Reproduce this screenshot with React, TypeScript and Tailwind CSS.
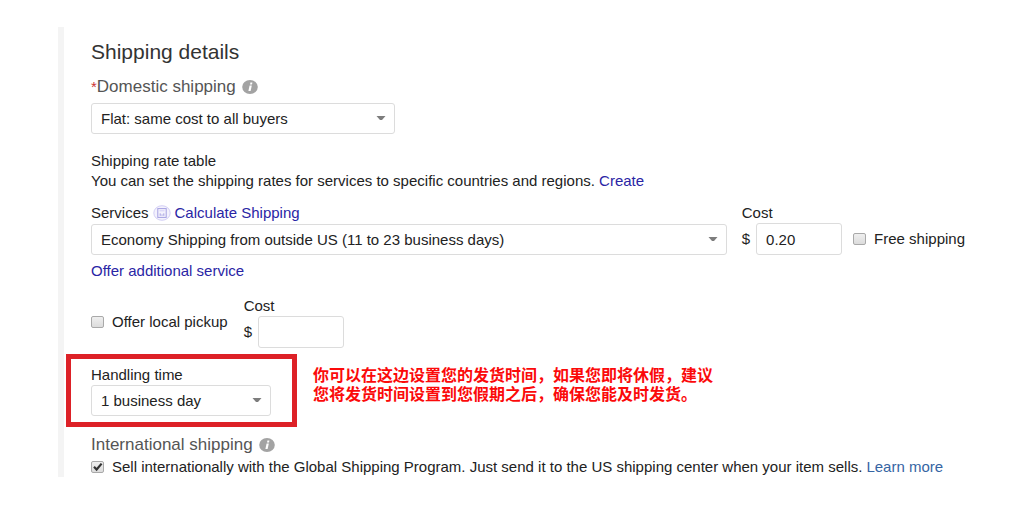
import { useState } from "react";
import type { ReactNode, SelectHTMLAttributes, InputHTMLAttributes } from "react";

function InfoIcon() {
    return (
        <svg viewBox="0 0 16 14" className="h-3.5 w-4 shrink-0" aria-hidden="true">
            <ellipse cx="8" cy="7" rx="7.8" ry="6.9" fill="#a3a3a3" />
            <path d="M8.4 2.6h2l-.4 1.8H8z" fill="#fff" />
            <path d="M7.6 5.4h2.2L8.6 11H6.4z" fill="#fff" />
        </svg>
    );
}

function CalculatorIcon() {
    return (
        <svg viewBox="0 0 18 16" className="h-4 w-[18px] shrink-0" fill="none" aria-hidden="true">
            <ellipse cx="9" cy="8" rx="8.2" ry="7.3" fill="#f4f2fd" stroke="#d3cff5" />
            <rect x="4.8" y="3.6" width="8.4" height="8.8" stroke="#a5a1e2" />
            <path d="M6.5 5.8h5" stroke="#d3cff5" />
            <path d="M7.2 8.4v2.4M9 9.4v1.4M10.8 8.4v2.4" stroke="#a5a1e2" />
        </svg>
    );
}

function Select({ className, children, ...props }: SelectHTMLAttributes<HTMLSelectElement> & { className: string }) {
    return (
        <div className={`relative ${className}`}>
            <select
                {...props}
                className="block h-[31px] w-full appearance-none rounded-[3px] border border-[#dcdcdc] bg-white pl-[9px] pr-8 text-[#222]"
            >
                {children}
            </select>
            <svg
                viewBox="0 0 10 5"
                className="pointer-events-none absolute right-[9px] top-[13px] h-[5px] w-2.5"
                aria-hidden="true"
            >
                <path d="M.5 0h9L6 4H4z" fill="#7d7d7d" />
            </svg>
        </div>
    );
}

function Checkbox({ children, ...props }: InputHTMLAttributes<HTMLInputElement> & { children: ReactNode }) {
    return (
        <label className="flex items-center gap-2 whitespace-nowrap">
            <span className="relative block h-3 w-[13px]">
                <input
                    type="checkbox"
                    {...props}
                    className="peer block h-3 w-[13px] appearance-none rounded-xs border border-[#a9a9a9] bg-linear-to-b from-[#efefef] to-[#dcdcdc]"
                />
                <svg
                    viewBox="0 0 13 12"
                    className="pointer-events-none absolute inset-0 hidden peer-checked:block"
                    fill="none"
                    aria-hidden="true"
                >
                    <path d="M3 5.8l2.6 2.7L10.6 2.6" stroke="#333" strokeWidth="2.2" />
                </svg>
            </span>
            {children}
        </label>
    );
}

function CostField({ id, value }: { id: string; value: string }) {
    const [cost, setCost] = useState(value);
    return (
        <div>
            <label htmlFor={id} className="block">
                Cost
            </label>
            <div className="flex items-center gap-1.5">
                <span>$</span>
                <input
                    id={id}
                    value={cost}
                    onChange={(e) => setCost(e.target.value)}
                    className="block h-8 w-[86px] rounded-[3px] border border-[#dcdcdc] px-[9px]"
                />
            </div>
        </div>
    );
}

export default function App() {
    return (
        <div className="bg-white py-[27px] pl-[58px] font-['Liberation_Sans',Arial,sans-serif] text-[15px] leading-5 text-[#222]">
            <form className="border-l-6 border-[#f4f4f4] pl-[27px] pr-12 pt-[11px]">
                <h2 className="text-[21px] leading-7 text-[#333]">Shipping details</h2>

                <div className="mt-[11px] flex items-center gap-1.5 text-[17px] leading-5 text-[#555]">
                    <label htmlFor="domestic">
                        <span className="text-[15px] text-[#c33]">*</span>Domestic shipping
                    </label>
                    <InfoIcon />
                </div>
                <Select id="domestic" className="mt-1.5 w-[304px]">
                    <option>Flat: same cost to all buyers</option>
                </Select>

                <h3 className="mt-[17px]">Shipping rate table</h3>
                <p>
                    You can set the shipping rates for services to specific countries and regions.{" "}
                    <a href="#create" className="text-[#2a25a5]">
                        Create
                    </a>
                </p>

                <div className="mt-3 flex items-end">
                    <div className="flex-1">
                        <div className="flex items-center gap-1">
                            <label htmlFor="service">Services</label>
                            <CalculatorIcon />
                            <a href="#calculate" className="text-[#2a25a5]">
                                Calculate Shipping
                            </a>
                        </div>
                        <Select id="service" className="mt-px">
                            <option>Economy Shipping from outside US (11 to 23 business days)</option>
                        </Select>
                    </div>
                    <div className="ml-[15px]">
                        <CostField id="service-cost" value="0.20" />
                    </div>
                    <div className="mb-1.5 ml-[11px]">
                        <Checkbox>Free shipping</Checkbox>
                    </div>
                </div>
                <a href="#additional" className="mt-1.5 inline-block text-[#2a25a5]">
                    Offer additional service
                </a>

                <div className="mt-[15px] flex items-center gap-4">
                    <Checkbox>Offer local pickup</Checkbox>
                    <CostField id="pickup-cost" value="" />
                </div>

                <div className="-ml-[25px] mt-1.5 flex items-start gap-4">
                    <div className="w-[231px] shrink-0 border-[5px] border-[#dd2127] pb-1.5 pl-5 pr-[21px] pt-1.5">
                        <label htmlFor="handling" className="block">
                            Handling time
                        </label>
                        <Select id="handling" className="">
                            <option>1 business day</option>
                        </Select>
                    </div>
                    <p
                        lang="zh-CN"
                        className="mt-3 font-['Liberation_Sans','Noto_Sans_CJK_SC',sans-serif] text-base font-bold leading-[19px] text-[#fb0a0a]"
                    >
                        你可以在这边设置您的发货时间，如果您即将休假，建议
                        <br />
                        您将发货时间设置到您假期之后，确保您能及时发货。
                    </p>
                </div>

                <h3 className="mt-2 flex items-center gap-1.5 text-[17px] leading-5 text-[#555]">
                    International shipping
                    <InfoIcon />
                </h3>
                <div className="mt-0.5 flex items-center gap-1">
                    <Checkbox defaultChecked>
                        Sell internationally with the Global Shipping Program. Just send it to the US shipping center
                        when your item sells.
                    </Checkbox>
                    <a href="#learn" className="text-[#3665a3]">
                        Learn more
                    </a>
                </div>
            </form>
        </div>
    );
}
